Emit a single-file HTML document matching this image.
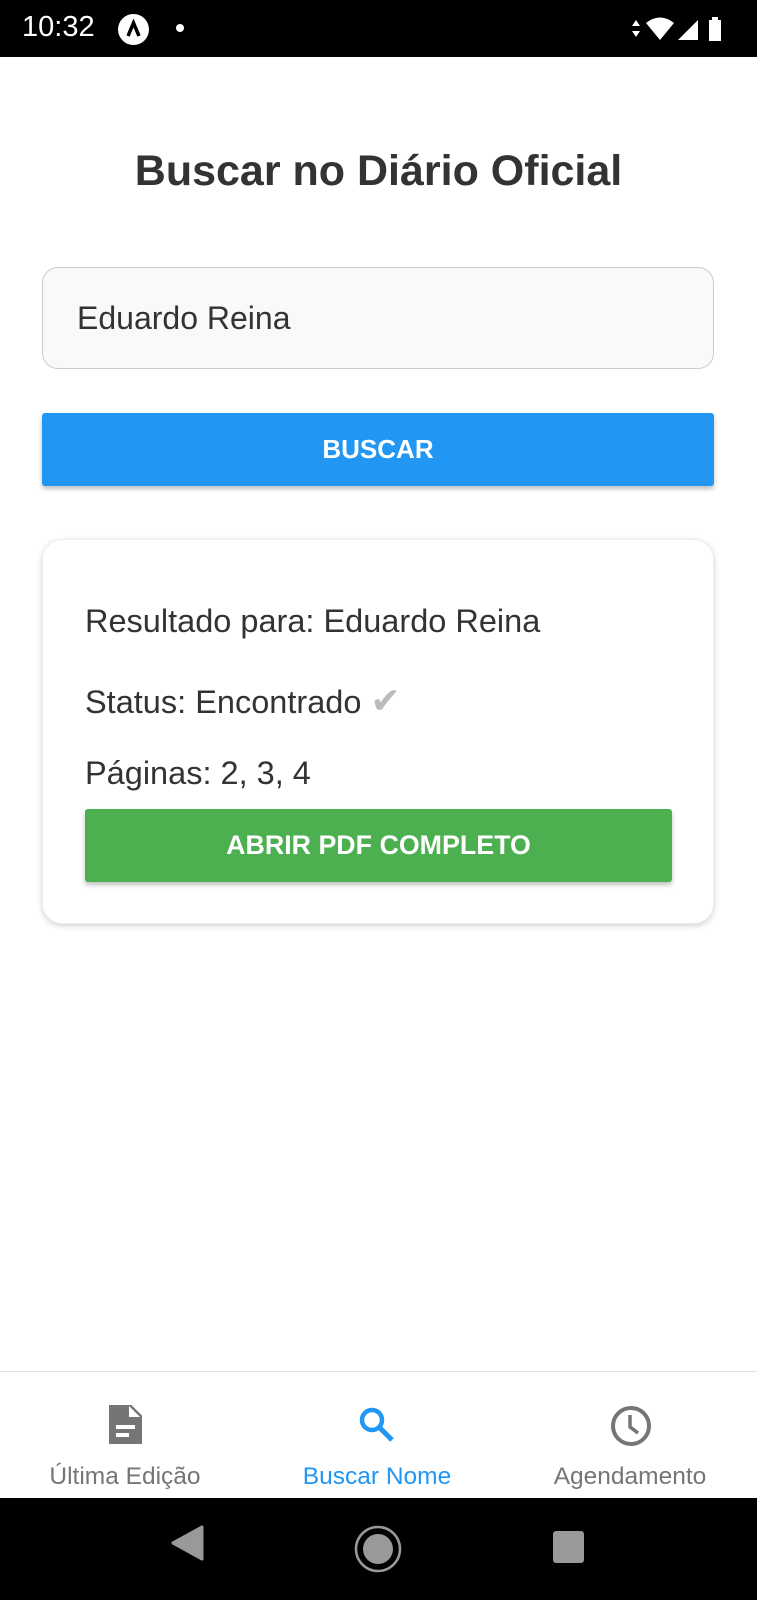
<!DOCTYPE html>
<html><head><meta charset="utf-8"><style>
*{margin:0;padding:0;box-sizing:border-box}
body{width:757px;height:1600px;position:relative;background:#fff;font-family:"Liberation Sans",Roboto,sans-serif;overflow:hidden;color:#333}
.abs{position:absolute}
</style></head><body>
<div class="abs" style="left:0;top:0;width:757px;height:57px;background:#000"></div>
<div class="abs" style="left:22px;top:11px;color:#fff;font-size:29px">10:32</div>
<div class="abs" style="left:118px;top:14px;width:31px;height:31px;border-radius:50%;background:#fff"></div>
<svg class="abs" style="left:118px;top:14px" width="31" height="31"><path d="M10 22 L15.5 9 L21 22" stroke="#000" stroke-width="3.5" fill="none"/></svg>
<div class="abs" style="left:176px;top:24px;width:8px;height:8px;border-radius:50%;background:#fff"></div>
<svg class="abs" style="left:628px;top:14px" width="110" height="30">
<path d="M4 2 L8 8 L0 8Z M0 13 L8 13 L4 19Z" fill="#fff" transform="translate(4,4)"/>
<path d="M18 9 Q32 -2 46 9 L32 26Z" fill="#fff"/>
<path d="M50 26 L70 6 L70 26Z" fill="#fff"/>
<rect x="81" y="6" width="12" height="21" fill="#fff"/><rect x="84" y="3" width="6" height="4" fill="#fff"/>
</svg>

<div class="abs" style="left:0;top:147px;width:757px;text-align:center;font-size:43px;font-weight:bold;color:#333">Buscar no Diário Oficial</div>

<div class="abs" style="left:42px;top:267px;width:672px;height:102px;border:1.5px solid #ccc;border-radius:16px;background:#f9f9f9"></div>
<div class="abs" style="left:77px;top:300px;font-size:32px;color:#333">Eduardo Reina</div>

<div class="abs" style="left:42px;top:413px;width:672px;height:73px;background:#2196F3;border-radius:3px;box-shadow:0 3px 5px rgba(0,0,0,.25);color:#fff;font-size:26px;font-weight:bold;text-align:center;line-height:73px">BUSCAR</div>

<div class="abs" style="left:42px;top:539px;width:672px;height:385px;border:1px solid #eee;border-radius:20px;background:#fff;box-shadow:0 2px 6px rgba(0,0,0,.18)"></div>
<div class="abs" style="left:85px;top:603px;font-size:32.5px">Resultado para: Eduardo Reina</div>
<div class="abs" style="left:85px;top:680px;font-size:32.5px">Status: Encontrado <span style="color:#bbb;font-size:36px">✔</span></div>
<div class="abs" style="left:85px;top:755px;font-size:32.5px">Páginas: 2, 3, 4</div>
<div class="abs" style="left:85px;top:809px;width:587px;height:73px;background:#4CAF50;border-radius:3px;box-shadow:0 3px 5px rgba(0,0,0,.25);color:#fff;font-size:26.8px;font-weight:bold;text-align:center;line-height:73px">ABRIR PDF COMPLETO</div>

<div class="abs" style="left:0;top:1371px;width:757px;height:1px;background:#e4e4e4"></div>
<svg class="abs" style="left:107px;top:1405px" width="36" height="40"><path d="M3 0 H23 L34 11 V38 H3Z" fill="#757575" stroke="#757575" stroke-linejoin="round" stroke-width="2"/><path d="M22 1 V12 H33" fill="#fff"/><rect x="9" y="20" width="19" height="4" fill="#fff"/><rect x="9" y="28" width="13" height="4" fill="#fff"/></svg>
<div class="abs" style="left:25px;top:1463px;width:200px;text-align:center;font-size:24.5px;color:#757575">Última Edição</div>
<svg class="abs" style="left:357px;top:1405px" width="44" height="44"><circle cx="15" cy="15" r="10" stroke="#2196F3" stroke-width="4.5" fill="none"/><path d="M22 22 L35 35" stroke="#2196F3" stroke-width="5"/></svg>
<div class="abs" style="left:277px;top:1463px;width:200px;text-align:center;font-size:24.5px;color:#2196F3">Buscar Nome</div>
<svg class="abs" style="left:609px;top:1404px" width="44" height="44"><circle cx="22" cy="22" r="18" stroke="#757575" stroke-width="4" fill="none"/><path d="M21 11 V23 L29 29" stroke="#757575" stroke-width="3.5" fill="none"/></svg>
<div class="abs" style="left:530px;top:1463px;width:200px;text-align:center;font-size:24.5px;color:#757575">Agendamento</div>

<div class="abs" style="left:0;top:1498px;width:757px;height:102px;background:#000"></div>
<svg class="abs" style="left:0;top:1498px" width="757" height="102">
<path d="M202 29 L202 61 L173 45Z" fill="#999" stroke="#999" stroke-linejoin="round" stroke-width="3"/>
<circle cx="378" cy="51" r="22" stroke="#999" stroke-width="2.5" fill="none"/><circle cx="378" cy="51" r="15" fill="#999"/>
<rect x="553" y="33" width="31" height="32" rx="3" fill="#999"/>
</svg>
</body></html>
